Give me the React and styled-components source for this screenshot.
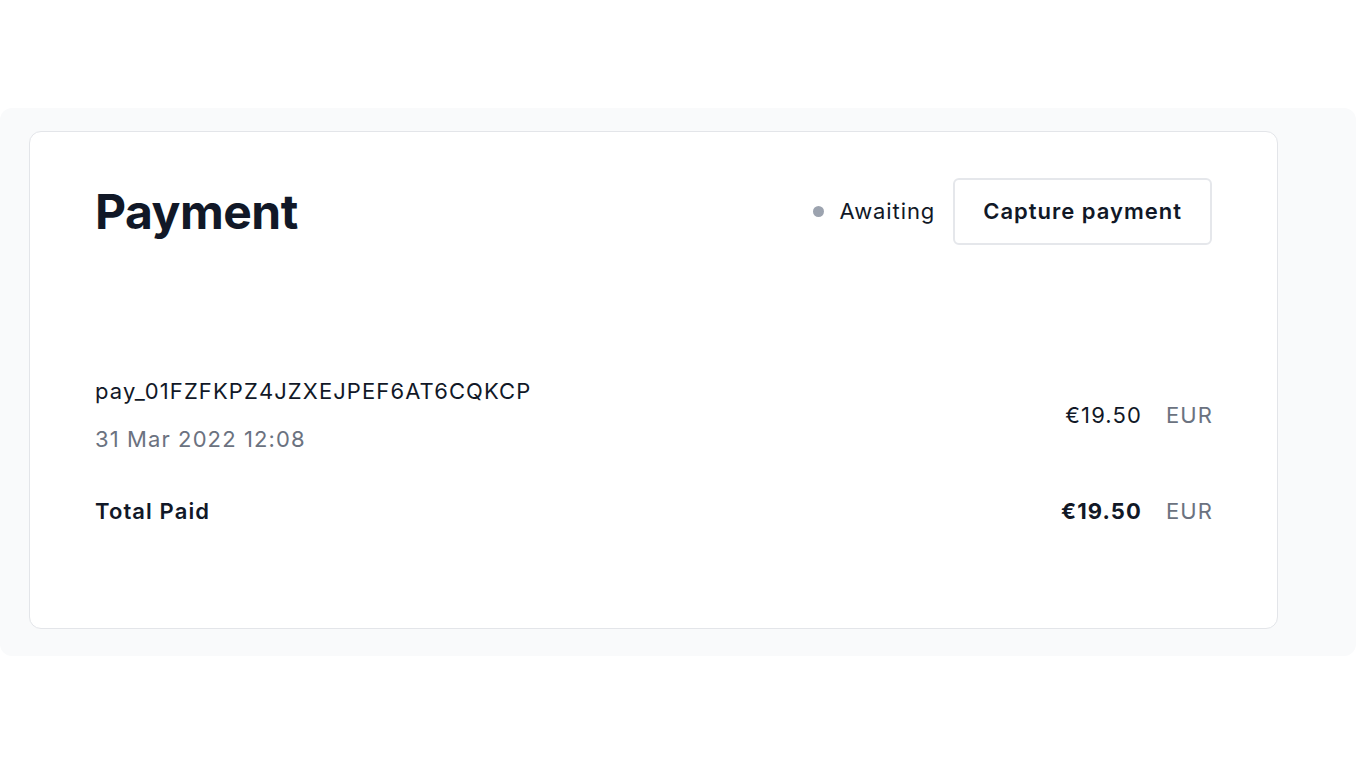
import React from "react";
import styled, { createGlobalStyle } from "styled-components";

const GlobalStyle = createGlobalStyle`
  * { box-sizing: border-box; }
  body {
    margin: 0;
    font-family: Inter, "Noto Sans", sans-serif;
    color: #111827;
    background: #fff;
  }
`;

function App() {
  const payment = {
    id: "pay_01FZFKPZ4JZXEJPEF6AT6CQKCP",
    date: "31 Mar 2022 12:08",
    amount: "€19.50",
    currency: "EUR",
  };

  return (
    <Page>
      <GlobalStyle />
      <Panel>
        <Card>
          <Header>
            <Title>Payment</Title>
            <Actions>
              <Status>
                <Dot />
                Awaiting
              </Status>
              <Button>Capture payment</Button>
            </Actions>
          </Header>
          <Row>
            <Info>
              <Line>{payment.id}</Line>
              <Line muted>{payment.date}</Line>
            </Info>
            <Amount>
              <Value>{payment.amount}</Value>
              <Currency>{payment.currency}</Currency>
            </Amount>
          </Row>
          <TotalRow>
            <Line bold>Total Paid</Line>
            <Amount>
              <Value bold>{payment.amount}</Value>
              <Currency>{payment.currency}</Currency>
            </Amount>
          </TotalRow>
        </Card>
      </Panel>
    </Page>
  );
}

export default App;

const Page = styled.div`
  min-height: 100vh;
  display: flex;
  align-items: center;
`;
const Panel = styled.div`
  width: 100%;
  background: #f9fafb;
  border-radius: 12px;
  padding: 23px 78px 27px 29px;
`;
const Card = styled.div`
  background: #fff;
  border: 1.5px solid #e3e5e9;
  border-radius: 12px;
  padding: 46px 65px 101px 65px;
`;
const Header = styled.div`
  display: flex;
  justify-content: space-between;
  align-items: center;
`;
const Title = styled.h1`
  margin: 0;
  font-size: 48px;
  font-weight: 700;
  letter-spacing: -0.5px;
  color: #111827;
`;
const Actions = styled.div`
  display: flex;
  align-items: center;
  gap: 18px;
`;
const Status = styled.div`
  display: flex;
  align-items: center;
  gap: 16px;
  font-size: 22px;
  letter-spacing: 0.9px;
  color: #111827;
`;
const Dot = styled.span`
  width: 11px;
  height: 11px;
  border-radius: 50%;
  background: #9ca3af;
`;
const Button = styled.button`
  font-family: inherit;
  font-size: 22px;
  font-weight: 600;
  letter-spacing: 1px;
  color: #111827;
  background: #fff;
  border: 2px solid #e5e7eb;
  border-radius: 6px;
  height: 67px;
  padding: 0 28px;
`;
const Row = styled.div`
  display: flex;
  justify-content: space-between;
  align-items: center;
  margin-top: 130px;
`;
const Info = styled.div`
  display: flex;
  flex-direction: column;
  gap: 16px;
`;
const Line = styled.div`
  font-size: 22px;
  line-height: 32px;
  letter-spacing: 1.1px;
  color: ${({ muted }) => (muted ? "#6b7280" : "#111827")};
  font-weight: ${({ bold }) => (bold ? 600 : 400)};
`;
const Amount = styled.div`
  display: flex;
  align-items: center;
  gap: 24px;
  font-size: 22px;
  line-height: 32px;
  letter-spacing: 1.1px;
`;
const Value = styled.span`
  color: #111827;
  font-weight: ${({ bold }) => (bold ? 700 : 400)};
`;
const Currency = styled.span`
  color: #6b7280;
  margin-right: -1px;
`;
const TotalRow = styled.div`
  display: flex;
  justify-content: space-between;
  align-items: center;
  margin-top: 40px;
`;
